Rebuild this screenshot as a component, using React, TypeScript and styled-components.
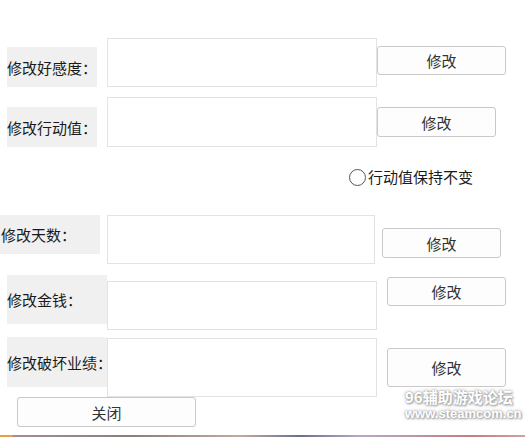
import React from "react";
import styled, { createGlobalStyle } from "styled-components";

const Global = createGlobalStyle`
  html, body { margin: 0; padding: 0; background: #ffffff; }
  body { font-family: "Noto Sans CJK SC", "Noto Sans", sans-serif; overflow: hidden; }
`;

const Form = styled.div`
  position: relative;
  width: 525px;
  height: 437px;
  display: flex;
  flex-direction: column;
  background: #ffffff;
`;

const Row = styled.div<{ $mt: number; $pl?: number }>`
  display: flex;
  align-items: flex-start;
  margin-top: ${(p) => p.$mt}px;
  padding-left: ${(p) => p.$pl ?? 0}px;
`;

const Label = styled.div<{ $ml: number; $mt?: number; $w: number; $h: number; $pl?: number }>`
  margin-left: ${(p) => p.$ml}px;
  margin-top: ${(p) => p.$mt ?? 0}px;
  width: ${(p) => p.$w}px;
  height: ${(p) => p.$h}px;
  padding-left: ${(p) => p.$pl ?? 0}px;
  box-sizing: border-box;
  background: #f0f0f0;
  display: flex;
  align-items: center;
  font-size: 15px;
  color: #1a1a1a;
  white-space: nowrap;
`;

const TextBox = styled.div<{ $ml: number; $mt?: number; $w: number; $h: number }>`
  margin-left: ${(p) => p.$ml}px;
  margin-top: ${(p) => p.$mt ?? 0}px;
  width: ${(p) => p.$w}px;
  height: ${(p) => p.$h}px;
  box-sizing: border-box;
  border: 1px solid #e3e3e3;
  background: #ffffff;
`;

const Button = styled.div<{ $ml: number; $mt?: number; $w: number; $h: number }>`
  margin-left: ${(p) => p.$ml}px;
  margin-top: ${(p) => p.$mt ?? 0}px;
  width: ${(p) => p.$w}px;
  height: ${(p) => p.$h}px;
  box-sizing: border-box;
  border: 1px solid #c9c9c9;
  border-radius: 3px;
  background: #fdfdfd;
  display: flex;
  align-items: center;
  justify-content: center;
  font-size: 15px;
  color: #333333;
`;

const Radio = styled.div`
  display: flex;
  align-items: center;
  height: 18px;
  line-height: 18px;
  font-size: 15px;
  color: #1a1a1a;
  gap: 2px;
`;

const Circle = styled.span`
  width: 17px;
  height: 17px;
  box-sizing: border-box;
  border: 1.5px solid #555555;
  border-radius: 50%;
  background: #ffffff;
`;

const Strip = styled.div`
  margin-top: 8px;
  height: 2px;
  background: linear-gradient(
    90deg,
    #e8a040 0px,
    #e8a040 12px,
    #a09090 13px,
    #8a7e7a 130px,
    #c4a8a0 240px,
    #6a7090 300px,
    #b8a8c8 360px,
    #c08080 470px,
    #d0a0a0 525px
  );
`;

const Watermark = styled.div`
  position: absolute;
  left: 405px;
  top: 389px;
  display: flex;
  flex-direction: column;
  align-items: flex-start;
  gap: 3px;
  color: #ffffff;
  font-weight: 700;
  text-shadow: 0 0 2px #9a9a9a, 0 0 4px #bdbdbd, 1px 1px 2px #9a9a9a;
`;

const WmTitle = styled.span`
  font-family: "Noto Sans CJK SC", sans-serif;
  font-size: 15px;
  line-height: 16px;
  height: 16px;
  letter-spacing: 0px;
`;

const WmUrl = styled.span`
  font-family: "Liberation Sans", Arial, sans-serif;
  font-size: 13px;
  line-height: 12px;
  height: 12px;
`;

export default function App() {
  return (
    <>
      <Global />
      <Form>
        <Row $mt={38}>
          <Label $ml={7} $mt={9} $w={90} $h={40}>修改好感度：</Label>
          <TextBox $ml={10} $w={270} $h={49} />
          <Button $ml={0} $mt={8} $w={129} $h={29}>修改</Button>
        </Row>
        <Row $mt={10}>
          <Label $ml={7} $mt={10} $w={90} $h={40}>修改行动值：</Label>
          <TextBox $ml={10} $w={270} $h={50} />
          <Button $ml={0} $mt={10} $w={119} $h={30}>修改</Button>
        </Row>
        <Row $mt={21} $pl={349}>
          <Radio>
            <Circle />
            行动值保持不变
          </Radio>
        </Row>
        <Row $mt={29}>
          <Label $ml={0} $w={100} $h={39} $pl={1}>修改天数：</Label>
          <TextBox $ml={7} $w={268} $h={49} />
          <Button $ml={7} $mt={13} $w={119} $h={30}>修改</Button>
        </Row>
        <Row $mt={11}>
          <Label $ml={7} $w={100} $h={49}>修改金钱：</Label>
          <TextBox $ml={0} $mt={6} $w={270} $h={49} />
          <Button $ml={10} $mt={2} $w={119} $h={29}>修改</Button>
        </Row>
        <Row $mt={7}>
          <Label $ml={7} $w={100} $h={50}>修改破坏业绩：</Label>
          <TextBox $ml={0} $mt={1} $w={270} $h={59} />
          <Button $ml={10} $mt={11} $w={119} $h={39}>修改</Button>
        </Row>
        <Row $mt={0}>
          <Button $ml={17} $w={179} $h={30}>关闭</Button>
        </Row>
        <Strip />
        <Watermark>
          <WmTitle>96辅助游戏论坛</WmTitle>
          <WmUrl>www.steamcom.cn</WmUrl>
        </Watermark>
      </Form>
    </>
  );
}
